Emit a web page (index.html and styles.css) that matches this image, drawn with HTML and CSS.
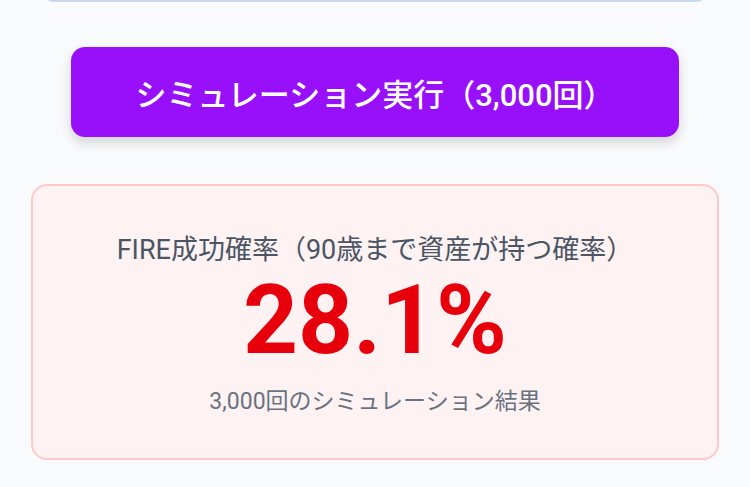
FILE: index.html
```html
<!DOCTYPE html>
<html lang="ja">
<head>
    <meta charset="UTF-8">
    <meta name="viewport" content="width=device-width, initial-scale=1.0">
    <title>FIRE シミュレーション</title>
    <link rel="stylesheet" href="styles.css">
</head>
<body>
    <div class="page">
        <div class="prev-box"></div>

        <div class="run-wrap">
            <button class="run-btn">シミュレーション実行（3,000回）</button>
        </div>

        <div class="result-card">
            <p class="result-label">FIRE成功確率（90歳まで資産が持つ確率）</p>
            <p class="result-value">28.1%</p>
            <p class="result-note">3,000回のシミュレーション結果</p>
        </div>
    </div>
</body>
</html>
```

FILE: styles.css
```css
body {
    margin: 0;
    background-color: #f9fafb;
    font-family: Roboto, "Noto Sans CJK JP", sans-serif;
    color: #333;
}

.page {
    padding: 0 31px;
}

/* bottom of the box above, scrolled mostly out of view */
.prev-box {
    height: 40px;
    margin: -40px 11px 0 11px;
    background-color: #eff6ff;
    border-bottom: 2px solid #c7d8f0;
    border-radius: 0 0 12px 12px;
}

.run-wrap {
    padding: 45px 40px 0 40px;
}

.run-btn {
    display: block;
    width: 100%;
    height: 90px;
    border: none;
    border-radius: 14px;
    background-color: #9810fa;
    color: #fff;
    font-family: Roboto, "Noto Sans CJK JP", sans-serif;
    font-size: 31px;
    font-weight: 500;
    box-shadow: 0 6px 12px rgba(0, 0, 0, 0.15);
    cursor: pointer;
}

.result-card {
    margin-top: 47px;
    height: 276px;
    box-sizing: border-box;
    border: 2px solid #ffc9c9;
    border-radius: 16px;
    background-color: #fef2f2;
    text-align: center;
    padding-top: 44px;
}

.result-label {
    margin: 0;
    font-size: 27px;
    line-height: 40px;
    color: #4a5565;
}

.result-value {
    margin: 0;
    font-size: 96px;
    font-weight: 700;
    line-height: 100px;
    color: #e7000b;
}

.result-note {
    margin: 16px 0 0 0;
    font-size: 23px;
    line-height: 32px;
    color: #6a7282;
}
```
